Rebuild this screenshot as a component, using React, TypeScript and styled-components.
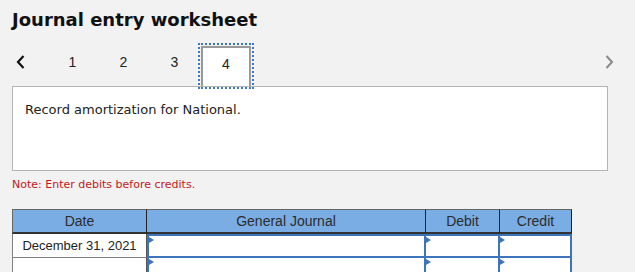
import React from 'react'
import styled, { createGlobalStyle } from 'styled-components'

const GlobalStyle = createGlobalStyle`
  html, body {
    margin: 0;
    padding: 0;
    background: #f2f2f2;
  }
  body {
    font-family: 'DejaVu Sans', Verdana, sans-serif;
    color: #222;
  }
`

const Page = styled.div`
  width: 635px;
  height: 272px;
  overflow: hidden;
  padding: 0 12px;
  box-sizing: border-box;
`

const Title = styled.h2`
  margin: 0;
  padding-top: 9px;
  font-size: 18px;
  line-height: 22px;
  font-weight: bold;
  color: #111;
`

const TabBar = styled.div`
  display: flex;
  align-items: stretch;
  height: 40px;
  margin-top: 15px;
  position: relative;
  z-index: 1;
`

const Arrow = styled.button<{ $muted?: boolean }>`
  all: unset;
  box-sizing: border-box;
  width: 35px;
  display: flex;
  align-items: center;
  padding-bottom: 8px;
  justify-content: ${(p) => (p.$muted ? 'center' : 'flex-start')};
  padding-left: ${(p) => (p.$muted ? '0' : '4px')};
  margin-left: ${(p) => (p.$muted ? 'auto' : '0')};
  margin-right: ${(p) => (p.$muted ? '-4px' : '0')};
  color: ${(p) => (p.$muted ? '#8a8a8a' : '#111')};
`

const Tab = styled.div<{ $active?: boolean }>`
  width: 51px;
  box-sizing: border-box;
  display: flex;
  align-items: center;
  justify-content: center;
  padding-bottom: 9px;
  font-family: 'Liberation Sans', Arial, sans-serif;
  font-size: 14px;
  color: #222;
  ${(p) =>
    p.$active &&
    `
    background: #fff;
    border: 2px solid #999;
    border-bottom: none;
    margin-left: 1px;
    width: 50px;
    padding-bottom: 7px;
    outline: 2px dotted #3a78c3;
    outline-offset: 1px;
  `}
`

const Panel = styled.div`
  height: 85px;
  width: 596px;
  box-sizing: border-box;
  background: #fff;
  border: 1px solid #b4b4b4;
  padding: 15px 12px;
  font-size: 13px;
  line-height: 16px;
  color: #222;
`

const Note = styled.p`
  margin: 7px 0 0;
  font-size: 11px;
  line-height: 14px;
  color: #c4161c;
`

const Table = styled.table`
  margin-top: 17px;
  border-collapse: separate;
  border-spacing: 0;
  table-layout: fixed;
  width: 560px;
  font-family: 'Liberation Sans', Arial, sans-serif;
  font-size: 13px;
`

const HeadCell = styled.th<{ $w: number; $first?: boolean }>`
  box-sizing: border-box;
  width: ${(p) => p.$w}px;
  height: 25px;
  padding: 0;
  background: #7aade4;
  border-top: 1px solid #666;
  border-bottom: 2px solid #333;
  border-right: 1px solid #222;
  border-left: ${(p) => (p.$first ? '1px solid #666' : 'none')};
  font-size: 14px;
  font-weight: normal;
  color: #2b2b2b;
`

const DateCell = styled.td`
  height: 23px;
  padding: 0;
  background: #fff;
  border-left: 1px solid #808080;
  border-right: 1px solid #555;
  border-bottom: 1px solid #808080;
  text-align: center;
  color: #222;
`

const InputCell = styled.td<{ $first?: boolean; $top?: boolean }>`
  height: 20px;
  padding: 0;
  background: #fff;
  border-right: 2px solid #3d74ba;
  border-bottom: 2px solid #3d74ba;
  border-left: ${(p) => (p.$first ? '2px solid #3d74ba' : 'none')};
  border-top: ${(p) => (p.$top ? '2px solid #3d74ba' : 'none')};
  position: relative;
`

const Flag = styled.span`
  position: absolute;
  top: 1px;
  left: 0;
  width: 0;
  height: 0;
  border-top: 3px solid transparent;
  border-bottom: 3px solid transparent;
  border-left: 5px solid #3d74ba;
`

const LeftChevron = () => (
  <svg width="9" height="14" viewBox="0 0 9 14" fill="none">
    <path d="M7.5 1 L2 7 L7.5 13" stroke="currentColor" strokeWidth="2.2" />
  </svg>
)

const RightChevron = () => (
  <svg width="9" height="14" viewBox="0 0 9 14" fill="none">
    <path d="M1.5 1 L7 7 L1.5 13" stroke="currentColor" strokeWidth="2" />
  </svg>
)

const rows = ['December 31, 2021', '']

export default function App() {
  return (
    <Page>
      <GlobalStyle />
      <Title>Journal entry worksheet</Title>
      <TabBar>
        <Arrow>
          <LeftChevron />
        </Arrow>
        {[1, 2, 3, 4].map((n) => (
          <Tab key={n} $active={n === 4}>
            {n}
          </Tab>
        ))}
        <Arrow $muted>
          <RightChevron />
        </Arrow>
      </TabBar>
      <Panel>Record amortization for National.</Panel>
      <Note>Note: Enter debits before credits.</Note>
      <Table>
        <thead>
          <tr>
            <HeadCell $w={135} $first>
              Date
            </HeadCell>
            <HeadCell $w={279}>General Journal</HeadCell>
            <HeadCell $w={74}>Debit</HeadCell>
            <HeadCell $w={72}>Credit</HeadCell>
          </tr>
        </thead>
        <tbody>
          {rows.map((d, i) => (
            <tr key={i}>
              <DateCell>{d}</DateCell>
              {[0, 1, 2].map((c) => (
                <InputCell key={c} $first={c === 0} $top={i === 0}>
                  <Flag />
                </InputCell>
              ))}
            </tr>
          ))}
        </tbody>
      </Table>
    </Page>
  )
}
